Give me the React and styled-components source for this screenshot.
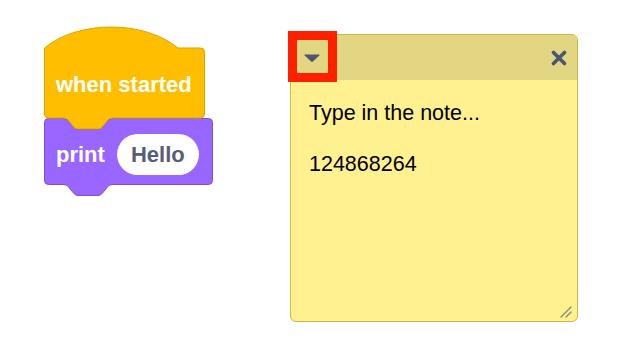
import React from "react";
import styled, { createGlobalStyle } from "styled-components";

const GlobalStyle = createGlobalStyle`
  html, body {
    margin: 0;
    padding: 0;
    background: #ffffff;
    font-family: "Liberation Sans", Arial, Helvetica, sans-serif;
  }
`;

// notch shared by the top and bottom of stack blocks
const NOTCH_X = 20;
const NOTCH_W = 48;
const NOTCH_D = 11;

function notchDown(x0, y0) {
  const w = NOTCH_W;
  const d = NOTCH_D;
  return `L ${x0} ${y0} Q ${x0 + 3} ${y0} ${x0 + 5} ${y0 + 3} L ${x0 + 9} ${y0 + d - 3} Q ${x0 + 11} ${y0 + d} ${x0 + 14} ${y0 + d} L ${x0 + w - 14} ${y0 + d} Q ${x0 + w - 11} ${y0 + d} ${x0 + w - 9} ${y0 + d - 3} L ${x0 + w - 5} ${y0 + 3} Q ${x0 + w - 3} ${y0} ${x0 + w} ${y0}`;
}

function notchDownReverse(x0, y0) {
  // same notch, walked from right to left
  const w = NOTCH_W;
  const d = NOTCH_D;
  const r = x0 + w;
  return `L ${r} ${y0} Q ${r - 3} ${y0} ${r - 5} ${y0 + 3} L ${r - 9} ${y0 + d - 3} Q ${r - 11} ${y0 + d} ${r - 14} ${y0 + d} L ${x0 + 14} ${y0 + d} Q ${x0 + 11} ${y0 + d} ${x0 + 9} ${y0 + d - 3} L ${x0 + 5} ${y0 + 3} Q ${x0 + 3} ${y0} ${x0} ${y0}`;
}

function blockPath(w, h, hat) {
  const l = 0.5;
  const r = w - 0.5;
  const top = hat ? 21 : 0.5;
  const bottom = top + h - (hat ? 0 : 1);
  let d = "";
  if (hat) {
    d += `M ${l} ${top} C 34 ${top - 28} 100 ${top - 28} 134 ${top} L ${r - 4} ${top}`;
  } else {
    d += `M ${l} ${top + 4} Q ${l} ${top} ${l + 4} ${top} ` + notchDown(NOTCH_X, top) + ` L ${r - 4} ${top}`;
  }
  d += ` Q ${r} ${top} ${r} ${top + 4} L ${r} ${bottom - 4} Q ${r} ${bottom} ${r - 4} ${bottom} `;
  d += notchDownReverse(NOTCH_X, bottom);
  d += ` L ${l + 4} ${bottom} Q ${l} ${bottom} ${l} ${bottom - 4} Z`;
  return d;
}

function Block({ width, height, hat, fill, stroke, children }) {
  const total = height + (hat ? 21 : 0);
  return (
    <BlockWrap $width={width} $height={total} $hat={hat}>
      <BlockShape width={width} height={total + NOTCH_D + 2}>
        <path d={blockPath(width, height, hat)} fill={fill} stroke={stroke} strokeWidth="1" />
      </BlockShape>
      <BlockContent $hat={hat}>{children}</BlockContent>
    </BlockWrap>
  );
}

function ResizeGrip() {
  return (
    <Grip width="14" height="14" viewBox="0 0 14 14">
      <path d="M2 12 L12 2 M7 12 L12 7" stroke="#8a8a7a" strokeWidth="1.4" strokeLinecap="round" />
    </Grip>
  );
}

export default function App() {
  return (
    <>
      <GlobalStyle />
      <Workspace>
        <Stack>
          <Block width={161} height={70} hat fill="#ffbf00" stroke="#dba500">
            <Label>when started</Label>
          </Block>
          <Block width={169} height={67} fill="#9966ff" stroke="#7a4fd6">
            <Label>print</Label>
            <Pill>Hello</Pill>
          </Block>
        </Stack>

        <Note>
          <NoteHeader>
            <Toggle aria-label="collapse">
              <svg width="18" height="10" viewBox="0 0 18 10">
                <path d="M2 1.5 H16 Q17.2 1.5 16.3 2.5 L10 8.5 Q9 9.4 8 8.5 L1.7 2.5 Q0.8 1.5 2 1.5 Z" fill="#4c5571" />
              </svg>
            </Toggle>
            <Highlight />
            <CloseButton aria-label="delete">
              <svg width="16" height="16" viewBox="0 0 16 16">
                <path d="M2.5 2.5 L13.5 13.5 M13.5 2.5 L2.5 13.5" stroke="#4c5571" strokeWidth="3.6" strokeLinecap="round" />
              </svg>
            </CloseButton>
          </NoteHeader>
          <NoteBody>{"Type in the note...\n\n124868264"}</NoteBody>
          <ResizeGrip />
        </Note>
      </Workspace>
    </>
  );
}

const Workspace = styled.div`
  display: flex;
  align-items: flex-start;
  padding: 27px 0 0 44px;
  height: 362px;
  box-sizing: border-box;
`;

const Stack = styled.div`
  display: flex;
  flex-direction: column;
`;

const BlockWrap = styled.div`
  position: relative;
  width: ${(p) => p.$width}px;
  height: ${(p) => p.$height}px;
  z-index: ${(p) => (p.$hat ? 2 : 1)};
`;

const BlockShape = styled.svg`
  position: absolute;
  top: 0;
  left: 0;
  overflow: visible;
  pointer-events: none;
`;

const BlockContent = styled.div`
  position: relative;
  box-sizing: border-box;
  height: 100%;
  display: flex;
  align-items: center;
  gap: 12px;
  padding: ${(p) => (p.$hat ? "24px 0 0 12px" : "6px 0 0 12px")};
`;

const Label = styled.span`
  color: #ffffff;
  font-size: 22px;
  font-weight: 700;
  white-space: nowrap;
`;

const Pill = styled.span`
  display: flex;
  align-items: center;
  height: 41px;
  box-sizing: border-box;
  padding: 0 14px;
  border-radius: 21px;
  background: #ffffff;
  color: #575e75;
  font-size: 22px;
  font-weight: 700;
`;

const Note = styled.div`
  position: relative;
  margin: 7px 0 0 77px;
  width: 288px;
  height: 288px;
  box-sizing: border-box;
  display: flex;
  flex-direction: column;
  background: #fff18f;
  border: 1.5px solid #cdb93f;
  border-radius: 6px;
`;

const NoteHeader = styled.div`
  position: relative;
  height: 45px;
  flex-shrink: 0;
  display: flex;
  align-items: center;
  justify-content: space-between;
  padding: 0 10px 0 12px;
  background: #e3d683;
  border-radius: 5px 5px 0 0;
`;

const Toggle = styled.button`
  display: flex;
  align-items: center;
  justify-content: center;
  width: 18px;
  height: 20px;
  padding: 0;
  border: none;
  background: transparent;
`;

const Highlight = styled.div`
  position: absolute;
  left: -3.5px;
  top: -4.5px;
  width: 49px;
  height: 51px;
  box-sizing: border-box;
  border: 9px solid #ff2000;
  pointer-events: none;
`;

const CloseButton = styled.button`
  display: flex;
  align-items: center;
  justify-content: center;
  width: 16px;
  height: 16px;
  padding: 0;
  border: none;
  background: transparent;
`;

const NoteBody = styled.div`
  flex: 1;
  padding: 21px 18px 0 18px;
  font-size: 21.5px;
  line-height: 25.5px;
  color: #000000;
  white-space: pre-wrap;
`;

const Grip = styled.svg`
  position: absolute;
  right: 4px;
  bottom: 2px;
`;
